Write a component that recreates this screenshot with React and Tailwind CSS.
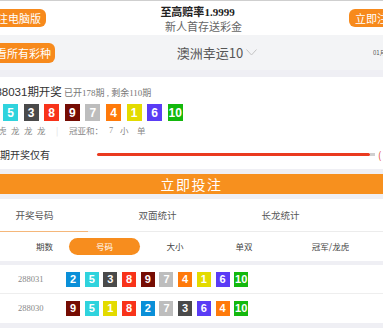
const BALL = {
  1: 'bg-[#e3db00]',
  2: 'bg-[#0a8fd8]',
  3: 'bg-[#4a4a4a]',
  4: 'bg-[#ff7a0a]',
  5: 'bg-[#2fd3dd]',
  6: 'bg-[#5a3cf5]',
  7: 'bg-[#bdbdbd]',
  8: 'bg-[#f8331a]',
  9: 'bg-[#750c03]',
  10: 'bg-[#13b80d]',
};

const sans = { fontFamily: '"Liberation Sans", "Noto Sans CJK SC", sans-serif' };
const serif = { fontFamily: '"Liberation Serif", "Noto Sans CJK SC", serif' };

function Ball({ n, big }) {
  return (
    <span
      className={`${BALL[n]} ${big ? 'w-[15px] h-[17px] text-[12px]' : 'w-[14px] h-[15px] text-[11px]'} shrink-0 flex items-center justify-center text-white font-bold leading-none`}
      style={sans}
    >
      {n}
    </span>
  );
}

const rows = [
  { issue: '288031', balls: [2, 5, 3, 8, 9, 7, 4, 1, 6, 10] },
  { issue: '288030', balls: [9, 5, 1, 8, 2, 7, 3, 6, 4, 10] },
];

export default function App() {
  return (
    <div className="w-[383px] h-[328px] overflow-hidden bg-[#efeff4]" style={{ fontFamily: '"Noto Sans CJK SC", sans-serif' }}>
      {/* top header */}
      <div className="h-[35px] bg-white border-t border-[#cfcfcf] flex items-center">
        <div className="ml-[-9px] h-[18px] pl-[6px] pr-[5px] rounded-[6px] bg-[#f78a1c] text-white text-[11px] leading-[18px] whitespace-nowrap">
          注电脑版
        </div>
        <div className="flex-1 flex flex-col items-center leading-none">
          <div className="text-[11px] font-bold text-[#222] mt-[1px]">
            至高赔率<span style={serif}>1.9999</span>
          </div>
          <div className="text-[11px] text-[#666] mt-[3px] ml-[12px]">新人首存送彩金</div>
        </div>
        <div className="w-[34px] overflow-hidden">
          <div className="w-[60px] h-[18px] pl-[6px] rounded-[6px] bg-[#f78a1c] text-white text-[11px] leading-[18px] whitespace-nowrap">
            立即注册
          </div>
        </div>
      </div>

      {/* lottery selector bar */}
      <div className="h-[35px] bg-[#f3f4f6] flex items-center">
        <div className="ml-[-10px] h-[20px] pl-[6px] pr-[4px] rounded-[6px] bg-[#f78a1c] text-white text-[11px] leading-[20px] whitespace-nowrap">
          看所有彩种
        </div>
        <div className="flex-1 flex items-center justify-center pl-[6px] text-[13px] text-[#555]">
          <span>澳洲幸运10</span>
          <svg width="11" height="7" viewBox="0 0 11 7" className="ml-[3px]">
            <polyline points="0.5,0.5 5.5,6 10.5,0.5" fill="none" stroke="#c4c4c4" strokeWidth="1" />
          </svg>
        </div>
        <div className="w-[10px] text-[6px] text-[#555] whitespace-nowrap">01月</div>
      </div>

      <div className="h-[7px]" />

      {/* latest draw */}
      <div className="bg-white h-[92px] pt-[6px]">
        <div className="flex items-baseline ml-[-11px] whitespace-nowrap">
          <span className="text-[11.5px] text-[#333]" style={sans}>288031<span style={{ fontFamily: '"Noto Sans CJK SC", sans-serif' }}>期开奖</span></span>
          <span className="text-[9px] text-[#777] ml-[2px]" style={serif}>已开178期 , 剩余110期</span>
        </div>
        <div className="flex gap-[5.6px] ml-[-17.6px] mt-[3px]">
          {[2, 5, 3, 8, 9, 7, 4, 1, 6, 10].map((n, i) => (
            <Ball key={i} n={n} big />
          ))}
        </div>
        <div className="flex items-center h-[14px] mt-[2px] text-[8.5px] text-[#888] leading-none whitespace-nowrap">
          <span className="w-[13px] ml-[-2px]">虎</span>
          <span className="w-[13px]">龙</span>
          <span className="w-[13px]">龙</span>
          <span className="w-[19px]">龙</span>
          <span className="w-[13px] text-[#ddd]">|</span>
          <span className="w-[40px]">冠亚和：</span>
          <span className="w-[11px]" style={serif}>7</span>
          <span className="w-[17px]">小</span>
          <span>单</span>
        </div>
        <div className="flex items-center h-[16px] mt-[9px] whitespace-nowrap">
          <span className="text-[10px] text-[#333] w-[97px]">期开奖仅有</span>
          <span className="w-[273px] h-[3px] rounded-full bg-[#ea3a1f]" />
          <span className="w-[5px] h-[3px] bg-[#cfcfcf]" />
          <span className="ml-[3px] text-[10px] text-[#e5533a]">(</span>
        </div>
      </div>

      <div className="h-[5px]" />

      {/* bet button */}
      <div className="h-[20px] bg-[#f7901e] flex items-center justify-center text-white text-[14px] tracking-[1.5px] leading-none">
        立即投注
      </div>

      <div className="h-[5px]" />

      {/* tabs */}
      <div className="bg-white">
        <div className="h-[33px] flex items-center border-b border-[#ececec] relative text-[9.5px] text-[#555]">
          <div className="w-[123px] ml-[-27px] text-center">开奖号码</div>
          <div className="w-[123px] text-center">双面统计</div>
          <div className="w-[123px] text-center">长龙统计</div>
          <div className="absolute left-0 bottom-[-1px] w-[88px] h-[1px] bg-[#f5b77a]" />
        </div>
        <div className="h-[29px] flex items-center text-[8.5px] text-[#444] pl-[20px] whitespace-nowrap">
          <div className="w-[52px] text-center">期数</div>
          <div className="w-[75px] h-[17px] rounded-full bg-[#f78d1e] text-white flex items-center justify-center">号码</div>
          <div className="w-[74px] text-center">大小</div>
          <div className="w-[72px] text-center">单双</div>
          <div className="w-[111px] text-center">冠军/龙虎</div>
        </div>
      </div>

      <div className="h-[4px]" />

      {/* history rows */}
      <div className="bg-white">
        {rows.map((r, i) => (
          <div key={r.issue} className={`h-[29px] flex items-center pl-[18px] ${i === 0 ? 'border-b border-[#eeeeee]' : ''}`}>
            <span className="w-[48px] text-[8.5px] text-[#888]" style={serif}>{r.issue}</span>
            <div className="flex gap-[4.7px]">
              {r.balls.map((n, j) => (
                <Ball key={j} n={n} />
              ))}
            </div>
          </div>
        ))}
      </div>
    </div>
  );
}
